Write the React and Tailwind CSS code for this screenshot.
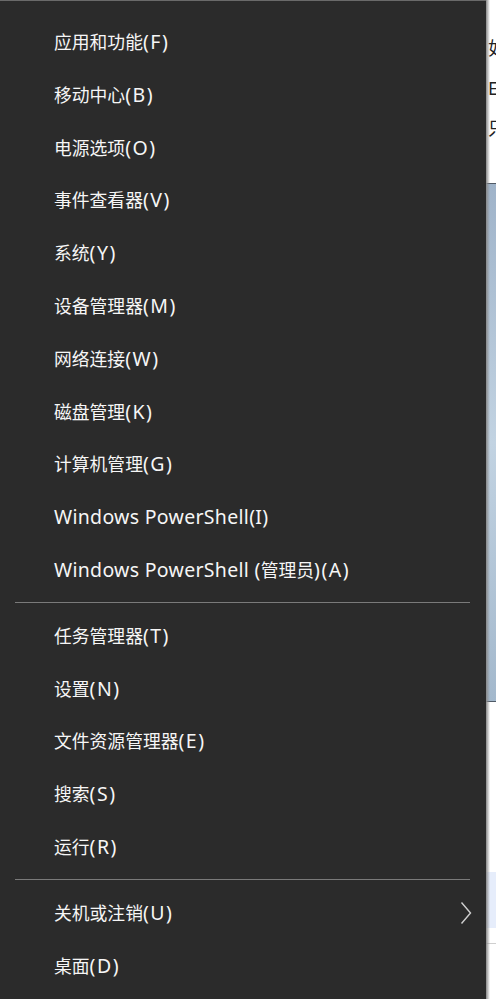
import React from "react";

const group1 = [
  "应用和功能(F)",
  "移动中心(B)",
  "电源选项(O)",
  "事件查看器(V)",
  "系统(Y)",
  "设备管理器(M)",
  "网络连接(W)",
  "磁盘管理(K)",
  "计算机管理(G)",
  "Windows PowerShell(I)",
  "Windows PowerShell (管理员)(A)",
];
const group2 = ["任务管理器(T)", "设置(N)", "文件资源管理器(E)", "搜索(S)", "运行(R)"];

function Label({ text }) {
  const parts = text.split(/([\u4e00-\u9fff]+)/).filter(Boolean);
  return (
    <span className="whitespace-pre">
      {parts.map((p, i) => {
        if (/[\u4e00-\u9fff]/.test(p)) {
          return (
            <span key={i} className="text-[17.8px]">
              {p}
            </span>
          );
        }
        if (/^[A-Za-z ]{3,}/.test(p)) {
          return (
            <span key={i} className="text-[19.5px] tracking-[0.3px]">
              {p}
            </span>
          );
        }
        return (
          <span key={i} className="text-[19.5px] tracking-[1.5px]">
            {p}
          </span>
        );
      })}
    </span>
  );
}

function Item({ label, chevron }) {
  return (
    <div className="flex h-[52.8px] items-center pl-[54px] leading-none text-[#f6f6f6]">
      <Label text={label} />
      {chevron && (
        <svg className="ml-auto mr-[14px]" width="12" height="24" viewBox="0 0 12 24">
          <polyline points="1.5,1.5 10.5,12 1.5,22.5" fill="none" stroke="#d0d0d0" strokeWidth="1.4" />
        </svg>
      )}
    </div>
  );
}

function Sep() {
  return <div className="my-[6px] ml-[15px] mr-[16px] h-px bg-[#7a7a7a]" />;
}

export default function App() {
  return (
    <div
      className="flex h-[999px] w-[496px] overflow-hidden bg-white"
      style={{ fontFamily: '"Noto Sans", "Noto Sans CJK SC", sans-serif' }}
    >
      <div className="flex w-[486px] shrink-0 flex-col border-t border-[#6a6a6a] bg-[#2b2b2b] pt-[14.6px]">
        {group1.map((l) => (
          <Item key={l} label={l} />
        ))}
        <Sep />
        {group2.map((l) => (
          <Item key={l} label={l} />
        ))}
        <Sep />
        <Item label="关机或注销(U)" chevron />
        <Item label="桌面(D)" />
      </div>
      <div className="relative flex-1 overflow-hidden">
        <div className="flex flex-col pl-[2px] pt-[28px] text-[18px] leading-[40px] whitespace-nowrap text-[#222]">
          <span>如</span>
          <span>E</span>
          <span>只</span>
        </div>
        <div className="mt-[35px] h-[519px] border-y border-[#505a66] bg-gradient-to-b from-[#9fb3c9] via-[#c2d3e2] to-[#a3b8cc]" />
        <div className="mt-[170px] h-[56px] bg-[#e6edfb]" />
        <div className="mt-[15px] h-px bg-[#cfcfcf]" />
        <div className="pointer-events-none absolute inset-y-0 left-0 w-[4px] bg-gradient-to-r from-[#8a8a8a] to-transparent" />
      </div>
    </div>
  );
}
